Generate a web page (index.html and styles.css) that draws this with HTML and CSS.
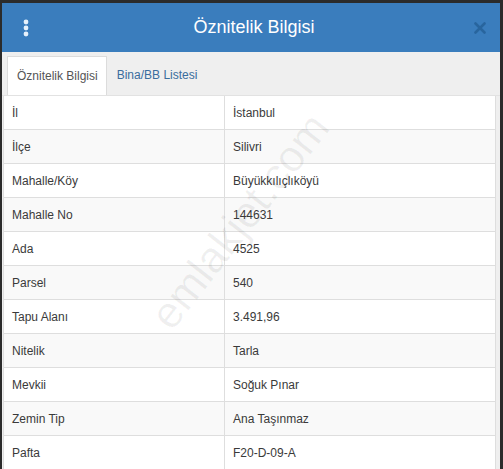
FILE: index.html
```html
<!DOCTYPE html>
<html lang="tr">
<head>
    <meta charset="UTF-8">
    <title>Öznitelik Bilgisi</title>
    <link rel="stylesheet" href="styles.css">
</head>
<body>
    <div class="dialog">
        <div class="dialog-header">
            <span class="menu-btn">
                <svg width="8" height="18" viewBox="0 0 8 18"><circle cx="4" cy="3" r="2.4" fill="#e6f1fb"/><circle cx="4" cy="9" r="2.4" fill="#e6f1fb"/><circle cx="4" cy="15" r="2.4" fill="#e6f1fb"/></svg>
            </span>
            <h1 class="dialog-title">Öznitelik Bilgisi</h1>
            <span class="close-btn">
                <svg width="12" height="12" viewBox="0 0 12 12"><path d="M1.5 1.5 L10.5 10.5 M10.5 1.5 L1.5 10.5" stroke="#28659e" stroke-width="2.6" stroke-linecap="round"/></svg>
            </span>
        </div>

        <div class="tab-bar">
            <div class="tab active">Öznitelik Bilgisi</div>
            <div class="tab">Bina/BB Listesi</div>
        </div>

        <div class="panel">
            <table class="attr-table">
                <tr><td>İl</td><td>İstanbul</td></tr>
                <tr><td>İlçe</td><td>Silivri</td></tr>
                <tr><td>Mahalle/Köy</td><td>Büyükkılıçlıköyü</td></tr>
                <tr><td>Mahalle No</td><td>144631</td></tr>
                <tr><td>Ada</td><td>4525</td></tr>
                <tr><td>Parsel</td><td>540</td></tr>
                <tr><td>Tapu Alanı</td><td>3.491,96</td></tr>
                <tr><td>Nitelik</td><td>Tarla</td></tr>
                <tr><td>Mevkii</td><td>Soğuk Pınar</td></tr>
                <tr><td>Zemin Tip</td><td>Ana Taşınmaz</td></tr>
                <tr><td>Pafta</td><td>F20-D-09-A</td></tr>
            </table>
            <div class="watermark">emlakjet.com</div>
        </div>
    </div>
</body>
</html>
```

FILE: styles.css
```css
body {
    margin: 0;
    background-color: #2b2b2b;
    font-family: "Liberation Sans", Arial, sans-serif;
    overflow: hidden;
}
.dialog {
    margin: 3px 3px 0 2px;
    width: 498px;
    background-color: #efefef;
}
.dialog-header {
    height: 49px;
    background-color: #3a7dbd;
    display: flex;
    align-items: center;
    padding: 0 14px 0 20px;
}
.menu-btn {
    display: flex;
    width: 24px;
}
.dialog-title {
    flex: 1;
    margin: 0;
    text-align: center;
    color: #fff;
    font-size: 18px;
    font-weight: normal;
}
.close-btn {
    display: flex;
    width: 24px;
    justify-content: flex-end;
}
.tab-bar {
    display: flex;
    padding: 4px 0 0 5px;
    height: 39px;
    border-bottom: 1px solid #e2e2e2;
    box-sizing: content-box;
}
.tab {
    padding: 0 10px 0 10px;
    line-height: 38px;
    font-size: 12px;
    color: #3a6d9d;
}
.tab.active {
    background-color: #fff;
    color: #555;
    border: 1px solid #dcdcdc;
    border-bottom: none;
    padding-left: 9px;
    padding-right: 8px;
}
.panel {
    position: relative;
    padding: 0 4px 0 1px;
    overflow: hidden;
}
.attr-table {
    width: 100%;
    border-collapse: collapse;
    background-color: #fff;
    font-size: 12px;
    color: #3a3a3a;
}
.attr-table td {
    height: 33px;
    padding: 0 8px;
    border: 1px solid #dedede;
    border-top: none;
}
.attr-table td:first-child {
    width: 204px;
}
.attr-table tr:nth-child(even) td {
    background-color: #f9f9f9;
}
/* site filigranı */
.watermark {
    position: absolute;
    left: 108px;
    top: 100px;
    font-size: 44px;
    color: rgba(0, 0, 0, 0.06);
    transform: rotate(-52deg);
    pointer-events: none;
}
```
